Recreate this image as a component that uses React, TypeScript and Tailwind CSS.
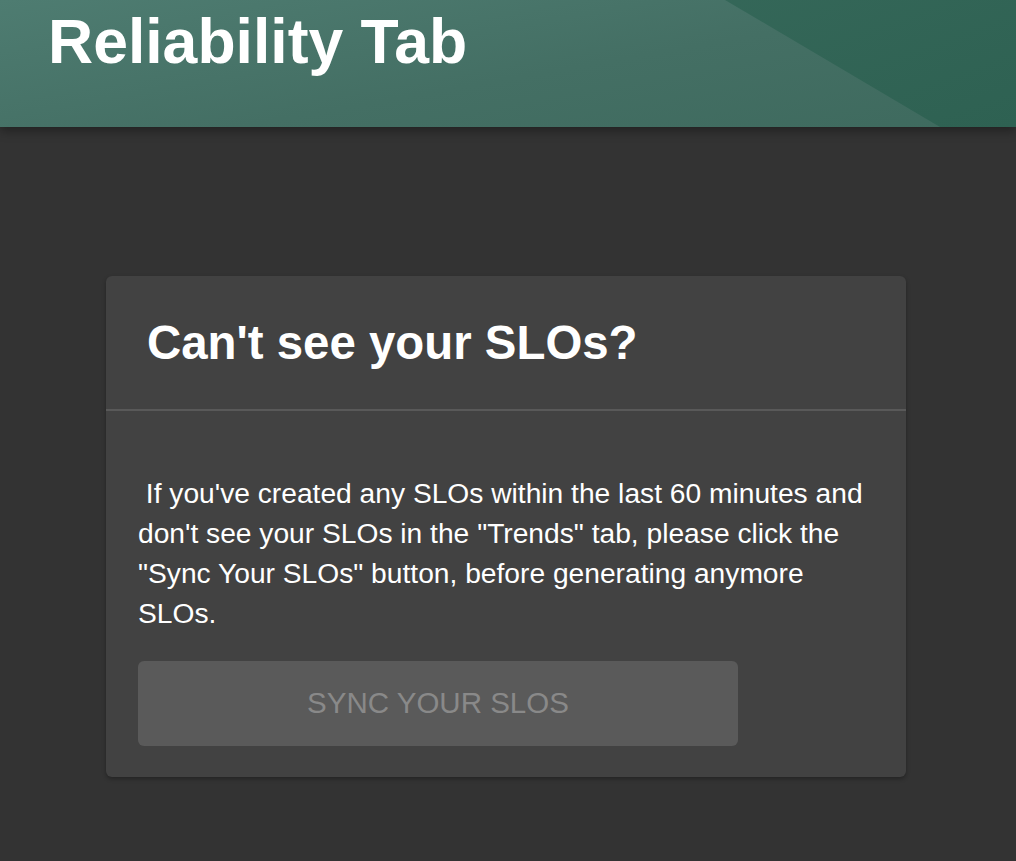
import React from 'react';

const Header: React.FC = () => (
  <header className="relative h-[127px] overflow-hidden bg-[linear-gradient(160deg,#3b6d5f_0%,#2e6152_100%)] shadow-[0_4px_10px_rgba(0,0,0,0.35)] z-10">
    {/* lighter diagonal sheen on the left */}
    <div className="absolute inset-0 bg-[linear-gradient(170deg,#4e7c71_0%,#446f64_55%,#3e6a5e_100%)] [clip-path:polygon(0_0,725px_0,940px_100%,0_100%)]" />
    <h1 className="relative pl-[48px] pt-[10px] text-[62.5px] leading-none font-bold text-white font-['Liberation_Sans',Arial,sans-serif]">
      Reliability Tab
    </h1>
  </header>
);

export default function App() {
  return (
    <div className="min-h-[861px] bg-[#333333] font-['Liberation_Sans',Arial,sans-serif]">
      <Header />
      <main className="pt-[149px] pl-[106px]">
        <div className="w-[800px] rounded-md bg-[#424242] shadow-[0_2px_4px_rgba(0,0,0,0.3)]">
          <div className="h-[135px] flex items-center pl-[41px] border-b-2 border-[#595959]">
            <h2 className="text-[47.4px] font-bold text-white leading-none">Can't see your SLOs?</h2>
          </div>
          <div className="px-[32px] pt-[62px] pb-[31px]">
            <p className="text-[28.2px] leading-[40px] text-white w-[736px]">
              &nbsp;If you've created any SLOs within the last 60 minutes and don't see your SLOs in the "Trends" tab, please click the "Sync Your SLOs" button, before generating anymore SLOs.
            </p>
            <button
              disabled
              className="mt-[28px] w-[600px] h-[85px] rounded-md bg-[#5a5a5a] text-[#898989] text-[29.5px] uppercase"
            >
              Sync Your SLOs
            </button>
          </div>
        </div>
      </main>
    </div>
  );
}
